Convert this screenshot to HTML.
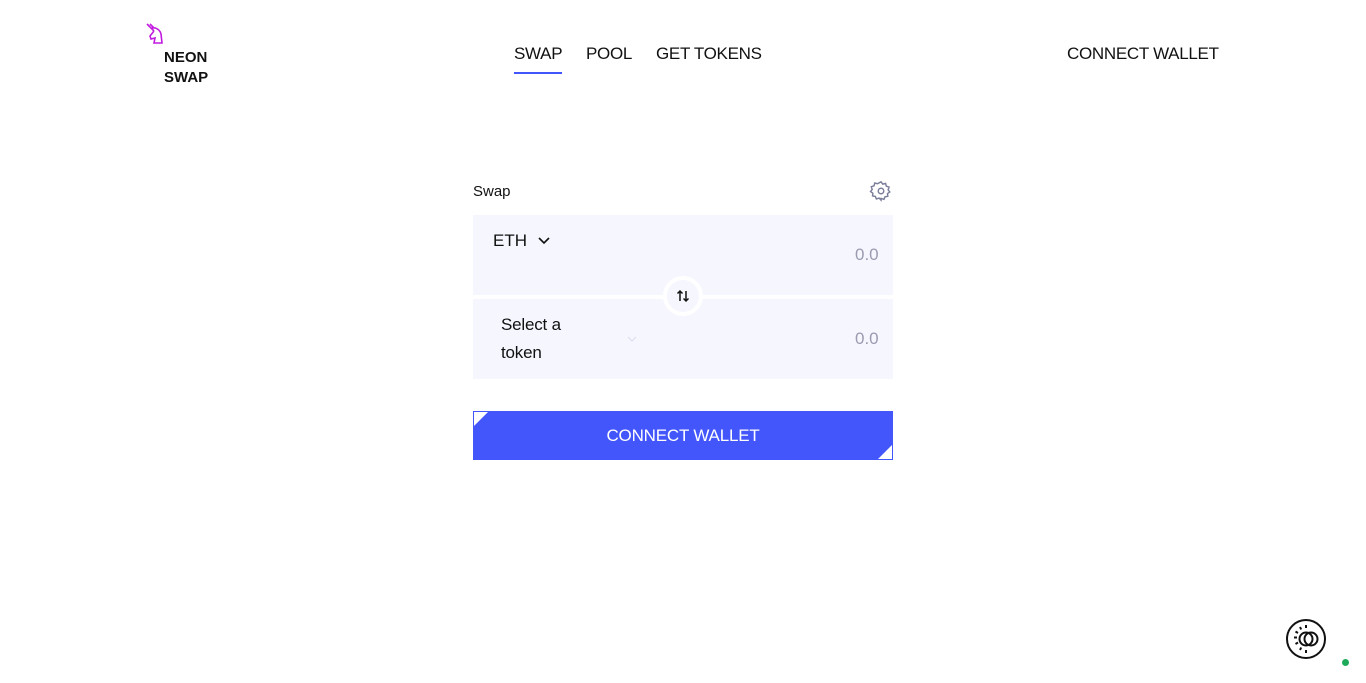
<!DOCTYPE html>
<html><head><meta charset="utf-8"><style>
*{margin:0;padding:0;box-sizing:border-box}
body{width:1366px;height:683px;background:#fff;font-family:"Liberation Sans",sans-serif;color:#111;position:relative;overflow:hidden}
.a{position:absolute}
.nav{font-size:17px;top:44px;letter-spacing:-0.3px}
</style></head><body>
<svg class="a" style="left:146px;top:23px" width="19" height="22" viewBox="0 0 19 22" fill="none" stroke="#c21be0" stroke-width="1.6"><path d="M1 1l7 7M4 1l4 4M6 5c4-1 8 2 9 6l1 9H8l1-5-4 1-1-3 4-5"/></svg>
<div class="a" style="left:164px;top:48px;font-size:15px;font-weight:bold;line-height:20px;letter-spacing:0">NEON<br>SWAP</div>
<div class="a nav" style="left:514px">SWAP</div>
<div class="a" style="left:514px;top:72px;width:48px;height:2px;background:#4356fb"></div>
<div class="a nav" style="left:586px">POOL</div>
<div class="a nav" style="left:656px">GET TOKENS</div>
<div class="a nav" style="left:1067px">CONNECT WALLET</div>
<div class="a" style="left:473px;top:183px;font-size:15px">Swap</div>
<svg class="a" style="left:869px;top:180px" width="24" height="22" viewBox="0 0 24 24" fill="none" stroke="#7b7f9a" stroke-width="1.6"><circle cx="12" cy="12" r="3"/><path d="M12 2l2 2.5 3-.8.8 3 3 1-1 3 1.8 2.3-2.5 1.8.3 3-3 .5-1.2 2.8-3-1L12 22l-2-2.3-3 1-1.2-2.8-3-.5.3-3L.6 12.6 2.4 10.3l-1-3 3-1 .8-3 3 .8z"/></svg>
<div class="a" style="left:473px;top:215px;width:420px;height:80px;background:#f6f7fe"></div>
<div class="a" style="left:473px;top:299px;width:420px;height:80px;background:#f6f7fe"></div>
<div class="a" style="left:493px;top:231px;font-size:17px">ETH</div>
<svg class="a" style="left:538px;top:237px" width="12" height="8"><path d="M1 1l5 5 5-5" fill="none" stroke="#111" stroke-width="1.6"/></svg>
<div class="a" style="left:855px;top:245px;font-size:17px;color:#9a9bb0">0.0</div>
<div class="a" style="left:855px;top:329px;font-size:17px;color:#9a9bb0">0.0</div>
<div class="a" style="left:501px;top:311px;font-size:17px;line-height:28px;letter-spacing:-0.2px">Select a<br>token</div>
<svg class="a" style="left:627px;top:336px" width="10" height="6"><path d="M1 1l4 4 4-4" fill="none" stroke="#dde" stroke-width="1.2"/></svg>
<div class="a" style="left:663px;top:276px;width:40px;height:40px;border-radius:50%;background:#fff"></div>
<div class="a" style="left:667px;top:280px;width:32px;height:32px;border-radius:50%;background:#f6f7fe"></div>
<svg class="a" style="left:676px;top:289px" width="14" height="14" viewBox="0 0 14 14" fill="none" stroke="#111" stroke-width="1.5"><path d="M4 12V2M1.5 4.5L4 2l2.5 2.5M10 2v10M7.5 9.5L10 12l2.5-2.5"/></svg>
<div class="a" style="left:473px;top:411px;width:420px;height:49px;background:#4356fb;color:#fff;font-size:17px;text-align:center;line-height:49px;letter-spacing:-0.2px">CONNECT WALLET</div>
<svg class="a" style="left:473px;top:411px" width="420" height="49"><path d="M0 0h16L0 16z" fill="#fff"/><path d="M420 33v16h-16z" fill="#fff"/><path d="M419.5 33v15.5H404" fill="none" stroke="#4356fb"/><path d="M.5 16V.5H16" fill="none" stroke="#4356fb"/></svg>
<svg class="a" style="left:1285px;top:618px" width="42" height="42" viewBox="0 0 42 42" fill="none" stroke="#111" stroke-width="2"><circle cx="21" cy="21" r="19"/><circle cx="21" cy="21" r="6.5"/><circle cx="26" cy="21" r="6.5"/><path d="M21 7v3M15 9l1.2 2.5M10.5 13.5l2.5 1.5M9 19.5h3M10.5 26l2.5-1.5M15 32l1.2-2.5M21 35v-3"/></svg>
<div class="a" style="left:1342px;top:659px;width:7px;height:7px;border-radius:50%;background:#1eaa5a"></div>
</body></html>
